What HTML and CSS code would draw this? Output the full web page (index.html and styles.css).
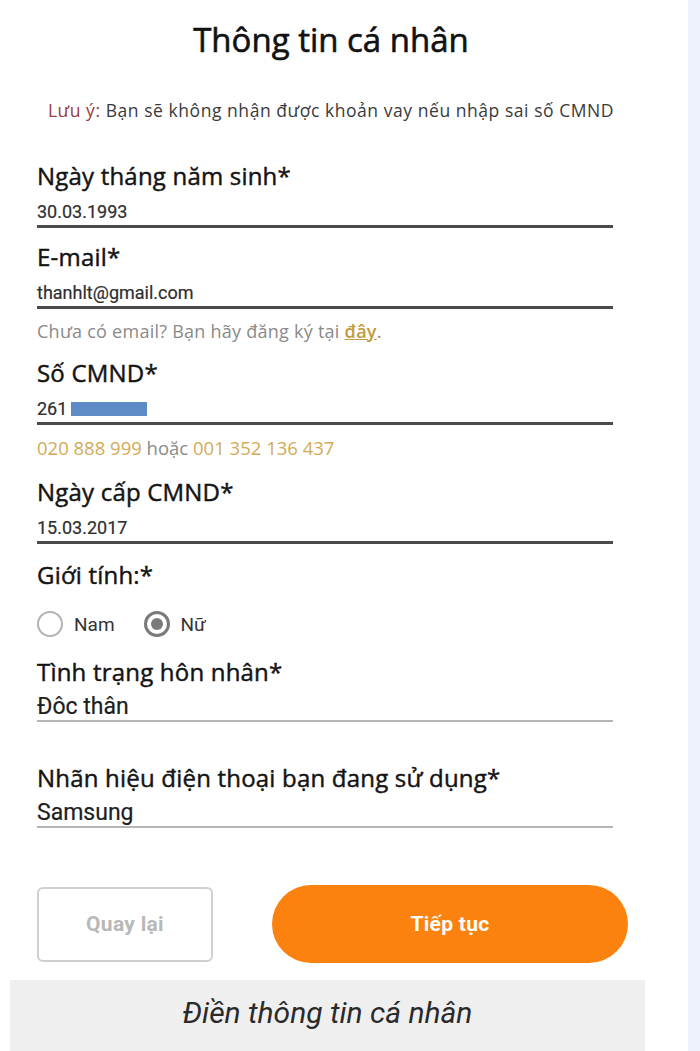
FILE: index.html
```html
<!DOCTYPE html>
<html lang="vi">
<head>
<meta charset="utf-8">
<title>Thông tin cá nhân</title>
<link rel="stylesheet" href="styles.css">
</head>
<body>
<div class="page">
  <main class="main">
    <div class="content">
      <h1 class="title">Thông tin cá nhân</h1>
      <p class="note"><span class="note-key">Lưu ý:</span> Bạn sẽ không nhận được khoản vay nếu nhập sai số CMND</p>

      <div class="field f1">
        <div class="label">Ngày tháng năm sinh*</div>
        <div class="value">30.03.1993</div>
      </div>

      <div class="field f2">
        <div class="label">E-mail*</div>
        <div class="value">thanhlt@gmail.com</div>
      </div>
      <p class="helper">Chưa có email? Bạn hãy đăng ký tại <a class="link" href="#">đây</a>.</p>

      <div class="field f3">
        <div class="label">Số CMND*</div>
        <div class="value">261<span class="mask"></span></div>
      </div>
      <p class="hint"><span class="gold">020 888 999</span> hoặc <span class="gold">001 352 136 437</span></p>

      <div class="field f4">
        <div class="label">Ngày cấp CMND*</div>
        <div class="value">15.03.2017</div>
      </div>

      <div class="label f5">Giới tính:*</div>
      <div class="radios">
        <label class="radio"><span class="circle"></span><span class="rtext">Nam</span></label>
        <label class="radio checked"><span class="circle"><span class="dot"></span></span><span class="rtext">Nữ</span></label>
      </div>

      <div class="field soft f6">
        <div class="label">Tình trạng hôn nhân*</div>
        <div class="value big">Đôc thân</div>
      </div>

      <div class="field soft f7">
        <div class="label">Nhãn hiệu điện thoại bạn đang sử dụng*</div>
        <div class="value big">Samsung</div>
      </div>

      <div class="actions">
        <button class="btn btn-back" type="button">Quay lại</button>
        <button class="btn btn-next" type="button">Tiếp tục</button>
      </div>
    </div>
    <div class="caption">Điền thông tin cá nhân</div>
  </main>
  <aside class="strip"></aside>
</div>
</body>
</html>
```

FILE: styles.css
```css
* { box-sizing: border-box; }
html, body { margin: 0; padding: 0; }
body { background: #ffffff; font-family: "Open Sans", "Noto Sans", sans-serif; color: #111; }

.page { display: flex; width: 700px; height: 1051px; overflow: hidden; }
.main { width: 688px; background: #fff; display: flex; flex-direction: column; }
.strip { width: 12px; background: #eef2fb; }

.content { padding: 20px 26px 0 37px; display: flex; flex-direction: column; }

.title {
  margin: 0 0 0 -37px;
  font-size: 33px;
  line-height: 40px;
  font-weight: 400;
  -webkit-text-stroke: 0.6px #111;
  text-align: center;
  color: #111;
}

.note {
  margin: 38px 0 0 -37px;
  font-size: 17.5px;
  line-height: 24px;
  text-align: center;
  color: #3a3a3a;
  letter-spacing: 0.55px;
}
.note-key { color: #9b3b3d; }

.field { width: 576px; }
.label {
  font-size: 24px;
  line-height: 30px;
  color: #141414;
  font-weight: 400;
  letter-spacing: 0.2px;
  -webkit-text-stroke: 0.45px #141414;
}
.value {
  margin-top: 11px;
  font-family: Roboto, "Liberation Sans", sans-serif;
  font-size: 18px;
  line-height: 20px;
  color: #2e2e2e;
  -webkit-text-stroke: 0.2px #2e2e2e;
  padding-bottom: 3px;
  border-bottom: 3px solid #4a4a4a;
  display: flex;
  align-items: center;
}
.mask { display: inline-block; width: 76px; height: 14px; background: #5f8bc7; margin-left: 4px; }

.f1 { margin-top: 39px; }
.f2 { margin-top: 14px; }
.f3 { margin-top: 17px; }
.f4 { margin-top: 18px; }
.f5 { margin-top: 16px; }
.f6 { margin-top: 19px; }
.f7 { margin-top: 41px; }

.helper {
  margin: 12px 0 0;
  font-size: 18px;
  line-height: 20px;
  color: #8a8a8a;
  letter-spacing: 0.25px;
}
.link { color: #c39a3c; text-decoration: underline; font-weight: 600; }

.hint {
  margin: 12px 0 0;
  font-size: 18.5px;
  line-height: 22px;
  color: #8a8a8a;
}
.gold { color: #d3aa55; }

.radios { margin-top: 20px; height: 28px; display: flex; align-items: center; gap: 29px; }
.radio { display: flex; align-items: center; gap: 11px; font-family: Roboto, "Liberation Sans", sans-serif; font-size: 19px; color: #333; }
.circle {
  width: 26px; height: 26px; border-radius: 50%;
  border: 2px solid #b3b3b3;
  display: flex; align-items: center; justify-content: center;
}
.checked .circle { border: 3px solid #7a7a7a; }
.dot { width: 12px; height: 12px; border-radius: 50%; background: #7a7a7a; }

.soft .value { border-bottom: 2px solid #b5b5b5; }
.value.big { font-size: 23px; line-height: 24px; margin-top: 8px; padding-bottom: 1px; color: #1e1e1e; -webkit-text-stroke: 0.2px #1e1e1e; }

.actions { margin-top: 57px; display: flex; gap: 59px; align-items: center; }
.btn { font-family: Roboto, "Liberation Sans", sans-serif; font-weight: 700; font-size: 21px; letter-spacing: 0.3px; cursor: pointer; }
.btn-back {
  width: 176px; height: 75px;
  background: #fff;
  border: 2px solid #cfcfcf;
  border-radius: 6px;
  color: #b8b8b8;
}
.btn-next {
  width: 356px; height: 78px;
  background: #fb820f;
  border: none;
  border-radius: 39px;
  color: #fff;
}

.caption {
  margin: 17px 0 0 10px;
  width: 635px;
  height: 71px;
  background: #efefef;
  font-family: Roboto, "Liberation Sans", sans-serif;
  font-style: italic;
  font-size: 30px;
  color: #2a2a2a;
  display: flex;
  align-items: center;
  justify-content: center;
  padding-bottom: 6px;
}
```
